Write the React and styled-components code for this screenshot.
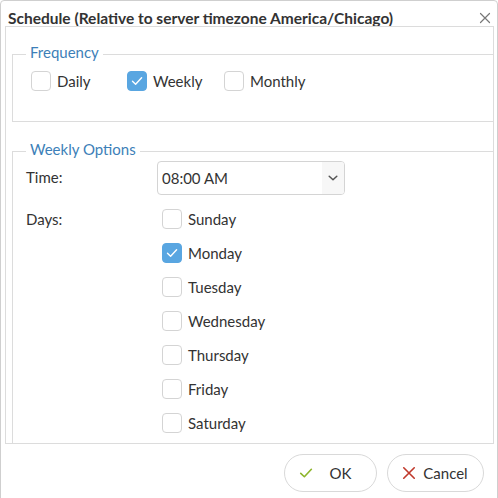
import React from "react";
import styled, { createGlobalStyle } from "styled-components";

const Global = createGlobalStyle`
  html, body {
    margin: 0;
    padding: 0;
    background: #ffffff;
    overflow: hidden;
  }
  body {
    font-family: Lato, "Noto Sans", sans-serif;
    color: #333333;
  }
`;

const Dialog = styled.div`
  box-sizing: border-box;
  width: 498px;
  height: 502px;
  border: 1px solid #cfcfcf;
  border-radius: 4px;
  background: #ffffff;
  display: flex;
  flex-direction: column;
`;

const TitleBar = styled.div`
  height: 25px;
  display: flex;
  align-items: center;
  justify-content: space-between;
  padding: 0 4px 0 7px;
`;

const Title = styled.h1`
  margin: 0;
  padding-top: 8px;
  font-size: 15.5px;
  font-weight: 700;
  color: #333333;
  letter-spacing: 0;
`;

const CloseButton = styled.button`
  border: none;
  background: none;
  padding: 0;
  margin-top: 9px;
  width: 16px;
  height: 16px;
  display: flex;
  align-items: center;
  justify-content: center;
  cursor: pointer;
`;

const Panel = styled.div`
  box-sizing: border-box;
  margin: 0 3px 0 4px;
  height: 418px;
  border: 1px solid #dcdcdc;
  overflow: hidden;
  padding: 17px 0 0 6px;
  display: flex;
  flex-direction: column;
  gap: 19px;
`;

const Group = styled.fieldset`
  box-sizing: border-box;
  width: 500px;
  flex-shrink: 0;
  margin: 0;
  border: 1px solid #dcdcdc;
  padding: 0 0 ${(p) => p.$bottom}px ${(p) => p.$left}px;
`;

const Legend = styled.legend`
  box-sizing: border-box;
  height: 20px;
  margin-left: ${(p) => p.$shift}px;
  padding: 0 4px 3px;
  font-size: 15px;
  line-height: 17px;
  color: #3d7fb8;
`;

const FrequencyRow = styled.div`
  display: grid;
  grid-template-columns: 96px 97px auto;
  margin-top: 7px;
`;

const CheckLabel = styled.label`
  display: flex;
  align-items: center;
  gap: 6px;
  font-size: 15px;
  line-height: 20px;
  color: #333333;
  cursor: pointer;
`;

const Box = styled.span`
  box-sizing: border-box;
  width: 20px;
  height: 20px;
  border-radius: 4px;
  border: 1px solid ${(p) => (p.$checked ? "#59a6e1" : "#d4d4d4")};
  background: ${(p) => (p.$checked ? "#59a6e1" : "#ffffff")};
  display: flex;
  align-items: center;
  justify-content: center;
  flex-shrink: 0;
`;

const OptionsGrid = styled.div`
  display: grid;
  grid-template-columns: 131px 188px;
  row-gap: 14px;
`;

const FieldLabel = styled.div`
  font-size: 15px;
  line-height: 20px;
  color: #333333;
  padding-top: ${(p) => p.$top}px;
`;

const Select = styled.div`
  box-sizing: border-box;
  height: 34px;
  border: 1px solid #d4d4d4;
  border-radius: 4px;
  display: flex;
  align-items: stretch;
  overflow: hidden;
`;

const SelectValue = styled.div`
  flex: 1;
  display: flex;
  align-items: center;
  padding-left: 4px;
  font-size: 15px;
  color: #333333;
`;

const SelectArrow = styled.div`
  width: 22px;
  background: #f7f7f7;
  display: flex;
  align-items: center;
  justify-content: center;
`;

const DayList = styled.div`
  display: flex;
  flex-direction: column;
  gap: 14px;
  padding-left: 5px;
  padding-bottom: 20px;
`;

const Footer = styled.div`
  flex: 1;
  display: flex;
  justify-content: flex-end;
  align-items: flex-start;
  gap: 10px;
  padding: 10px 13px 0 0;
`;

const Button = styled.button`
  box-sizing: border-box;
  height: 38px;
  min-width: ${(p) => p.$minWidth}px;
  border: 1px solid #d9d9d9;
  border-radius: 19px;
  background: #ffffff;
  display: flex;
  align-items: center;
  padding: 0 14px 0 14px;
  font-family: inherit;
  font-size: 15px;
  color: #333333;
  cursor: pointer;
`;

const ButtonText = styled.span`
  flex: 1;
  text-align: center;
  padding-left: 6px;
`;

const Tick = ({ color = "#ffffff", size = 12 }) => (
  <svg width={size} height={size} viewBox="0 0 12 12" fill="none">
    <path d="M1.5 6.3 L4.6 9.2 L10.6 2.8" stroke={color} strokeWidth="1.4" strokeLinecap="round" strokeLinejoin="round" />
  </svg>
);

const Cross = ({ color, size, width = 1.3 }) => (
  <svg width={size} height={size} viewBox="0 0 12 12" fill="none">
    <path d="M1.5 1.5 L10.5 10.5 M10.5 1.5 L1.5 10.5" stroke={color} strokeWidth={width} strokeLinecap="round" />
  </svg>
);

const Chevron = () => (
  <svg width="10" height="6" viewBox="0 0 10 6" fill="none">
    <path d="M1.2 1.2 L5 4.8 L8.8 1.2" stroke="#555555" strokeWidth="1.5" strokeLinecap="round" strokeLinejoin="round" />
  </svg>
);

const Check = ({ checked, children }) => (
  <CheckLabel>
    <Box $checked={checked}>{checked && <Tick />}</Box>
    {children}
  </CheckLabel>
);

const days = [
  ["Sunday", false],
  ["Monday", true],
  ["Tuesday", false],
  ["Wednesday", false],
  ["Thursday", false],
  ["Friday", false],
  ["Saturday", false],
];

export default function App() {
  return (
    <>
      <Global />
      <Dialog>
        <TitleBar>
          <Title>Schedule (Relative to server timezone America/Chicago)</Title>
          <CloseButton aria-label="Close">
            <Cross color="#777777" size={12} width={1.2} />
          </CloseButton>
        </TitleBar>
        <Panel>
          <Group $left={18} $bottom={30}>
            <Legend $shift={-5}>Frequency</Legend>
            <FrequencyRow>
              <Check>Daily</Check>
              <Check checked>Weekly</Check>
              <Check>Monthly</Check>
            </FrequencyRow>
          </Group>
          <Group $left={13} $bottom={10}>
            <Legend $shift={0}>Weekly Options</Legend>
            <OptionsGrid>
              <FieldLabel $top={6}>Time:</FieldLabel>
              <Select>
                <SelectValue>08:00 AM</SelectValue>
                <SelectArrow>
                  <Chevron />
                </SelectArrow>
              </Select>
              <FieldLabel $top={0}>Days:</FieldLabel>
              <DayList>
                {days.map(([name, on]) => (
                  <Check key={name} checked={on}>
                    {name}
                  </Check>
                ))}
              </DayList>
            </OptionsGrid>
          </Group>
        </Panel>
        <Footer>
          <Button $minWidth={93}>
            <Tick color="#8db52b" size={14} />
            <ButtonText>OK</ButtonText>
          </Button>
          <Button $minWidth={97}>
            <Cross color="#c0392b" size={14} width={1.4} />
            <ButtonText>Cancel</ButtonText>
          </Button>
        </Footer>
      </Dialog>
    </>
  );
}
